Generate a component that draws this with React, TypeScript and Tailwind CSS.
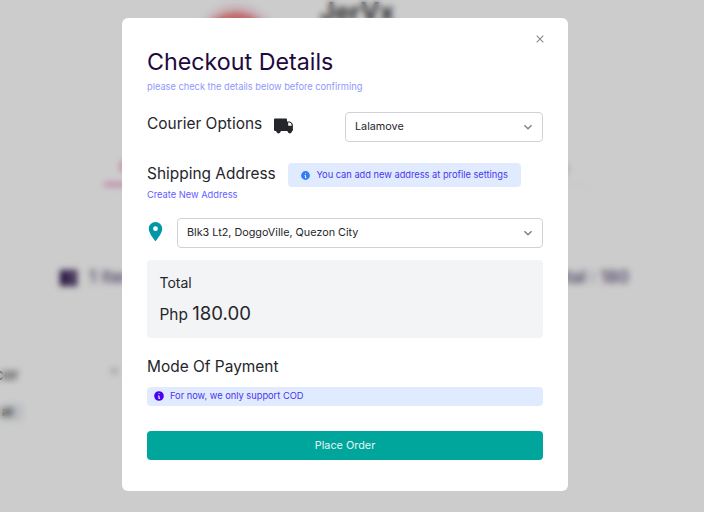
import React from "react";
import { MdLocationOn } from "react-icons/md";
import { HiInformationCircle } from "react-icons/hi";

function Chevron() {
  return (
    <svg className="h-2.5 w-2.5 shrink-0" viewBox="0 0 10 10" fill="none" stroke="#808489" strokeWidth="1.5">
      <path d="M1.4 3.2 5 6.8l3.6-3.6" />
    </svg>
  );
}

function Truck({ className }: { className: string }) {
  return (
    <svg className={className} viewBox="0 0 19 16" fill="currentColor">
      <path
        fillRule="evenodd"
        d="M1 .4h11a1 1 0 0 1 1 1v2h2.3c.8 0 1.4.3 1.9.8l1.1 1.4c.4.5.6 1 .6 1.6v5a.7.7 0 0 1-.7.7H.8a.8.8 0 0 1-.8-.8V1.400a1 1 0 0 1 1-1Zm13.200 4.200v3.100h3.500c0-1.700-1-3.100-2.500-3.100Z"
      />
      <circle cx="4.500" cy="13.300" r="2.100" />
      <circle cx="15.800" cy="13.300" r="2.100" />
    </svg>
  );
}

function Select({ value, className }: { value: string; className: string }) {
  return (
    <button
      className={`flex h-[30px] items-center justify-between rounded-[4px] border border-[#d0d2d5] bg-white pr-[9px] pl-[9px] text-[10.8px] text-[#25262b] ${className}`}
    >
      <span className="pt-px">{value}</span>
      <Chevron />
    </button>
  );
}

function OrdersPage() {
  return (
    <div className="flex h-full w-full flex-col overflow-hidden bg-white">
      <header className="flex h-[150px] shrink-0 pl-[192px]">
        <div className="mt-[4px] h-[88px] w-[88px] shrink-0 rounded-full border-[8px] border-[#f8e4ec] bg-[#f28282]" />
        <h1 className="-mt-[7px] ml-[40px] text-[25.5px] font-bold text-[#3a3a3d]">JerVx</h1>
      </header>
      <nav className="flex h-[38px] shrink-0 pl-[104px] text-[12px]">
        <div className="flex h-[36px] w-[160px] items-center border-b-3 border-[#f07fb8] pl-[16px] text-[14px] font-semibold text-[#ec4899]">Cart</div>
        <div className="flex h-[36px] w-[324px] items-center justify-end border-b border-[#f4f4f4] pr-[19px] text-[#999]">History</div>
      </nav>
      <div className="mt-[76px] flex h-[27px] shrink-0 items-center pl-[60px] text-[17px] font-medium text-[#5c4d78]">
        <span className="flex h-[16px] w-[17px] gap-px">
          <span className="w-[9px] bg-[#30164f]" />
          <span className="flex flex-1 flex-col gap-px">
            <span className="flex-1 bg-[#30164f]" />
            <span className="flex-1 bg-[#30164f]" />
          </span>
        </span>
        <span className="ml-[12px] flex-1 tracking-[0.4px]">1 Item</span>
        <span className="pr-[75px]">Total : 180</span>
      </div>
      <div className="mt-[72px] flex h-[24px] shrink-0 items-center">
        <span className="w-[110px] text-[15px] font-medium text-[#444]">
          <span className="-ml-[5px]">cor</span>
        </span>
        <span className="-mt-[8px] text-[13px] text-[#888]">×</span>
      </div>
      <div className="mt-[17px] flex h-[17px] w-[23px] shrink-0 items-center rounded bg-[#e9ecef] pb-px pl-[2px] text-[12px] font-semibold text-[#333]">at</div>
    </div>
  );
}

export default function App() {
  return (
    <main className="relative h-[512px] w-[704px] overflow-hidden bg-[#cccccc] font-['Inter','Liberation_Sans',sans-serif]">
      <OrdersPage />
      <div className="absolute inset-0 flex items-start justify-center bg-black/20 pt-[18px] pr-[14px] backdrop-blur-[3px]">
        <section className="flex h-[473px] w-[446px] flex-col rounded-[6px] bg-white px-[25px] text-[#25262b]">
          <div className="-mr-[4px] flex h-[30px] items-end justify-end">
            <button aria-label="Close" className="flex h-[18px] w-[14px] items-center justify-center">
              <svg className="h-[8px] w-[8px]" viewBox="0 0 8 8" fill="none" stroke="#85898e" strokeWidth="1.1">
                <path d="m.7.7 6.6 6.6m0-6.6L.7 7.3" />
              </svg>
            </button>
          </div>
          <h2 className="h-[28px] text-[23.25px] leading-[28px] text-[#1e0a3c]">Checkout Details</h2>
          <p className="mt-[4px] h-[14px] text-[9.26px] leading-[14px] text-[#8f98fc]">please check the details below before confirming</p>

          <div className="mt-[18px] flex h-[30px] justify-between">
            <div className="flex">
              <h3 className="w-[115px] text-[15.45px] leading-[23px] whitespace-nowrap">Courier Options</h3>
              <Truck className="mt-[6px] ml-[12px] h-[16px] w-[19px] text-[#25262b]" />
            </div>
            <Select value="Lalamove" className="w-[198px]" />
          </div>

          <div className="mt-[21px] flex h-[24px] items-center">
            <h3 className="-mt-[4px] w-[128px] text-[15.45px] leading-[23px] whitespace-nowrap">Shipping Address</h3>
            <div className="ml-[13px] flex h-[24px] w-[233px] items-center rounded-[4px] bg-[#e0ebff] pl-[12px] text-[9.28px] whitespace-nowrap text-[#4a35ee]">
              <HiInformationCircle className="h-[11px] w-[11px] text-[#2f7cf6]" />
              <span className="ml-[5.5px]">You can add new address at profile settings</span>
            </div>
          </div>
          <a className="mt-px h-[14px] text-[9.28px] leading-[14px] text-[#645cff]">Create New Address</a>

          <div className="mt-[16px] flex h-[30px] items-center">
            <MdLocationOn className="-mt-[4px] -ml-[3px] h-[23px] w-[23px] text-[#0097a7]" />
            <Select value="Blk3 Lt2, DoggoVille, Quezon City" className="ml-[10px] w-[366px]" />
          </div>

          <div className="mt-[12px] h-[78px] rounded-[4px] bg-[#f3f4f6] px-[12.5px] pt-[12px]">
            <p className="text-[14px] leading-[22px]">Total</p>
            <p className="mt-[6px] text-[15.45px] leading-[27px]">
              Php <span className="text-[18.6px]">180.00</span>
            </p>
          </div>

          <h3 className="mt-[17px] text-[15.45px] leading-[23px]">Mode Of Payment</h3>
          <div className="mt-[9px] flex h-[19px] items-center rounded-[4px] bg-[#e0ebff] pl-[5.5px] text-[9.28px] text-[#4a35ee]">
            <HiInformationCircle className="-mt-px h-[12px] w-[12px] text-[#4900f5]" />
            <span className="-mt-px ml-[5.5px]">For now, we only support COD</span>
          </div>
          <button className="mt-[25px] h-[29px] rounded-[4px] bg-[#00a69c] text-[10.85px] text-[#e4f7f5]">Place Order</button>
        </section>
      </div>
    </main>
  );
}
